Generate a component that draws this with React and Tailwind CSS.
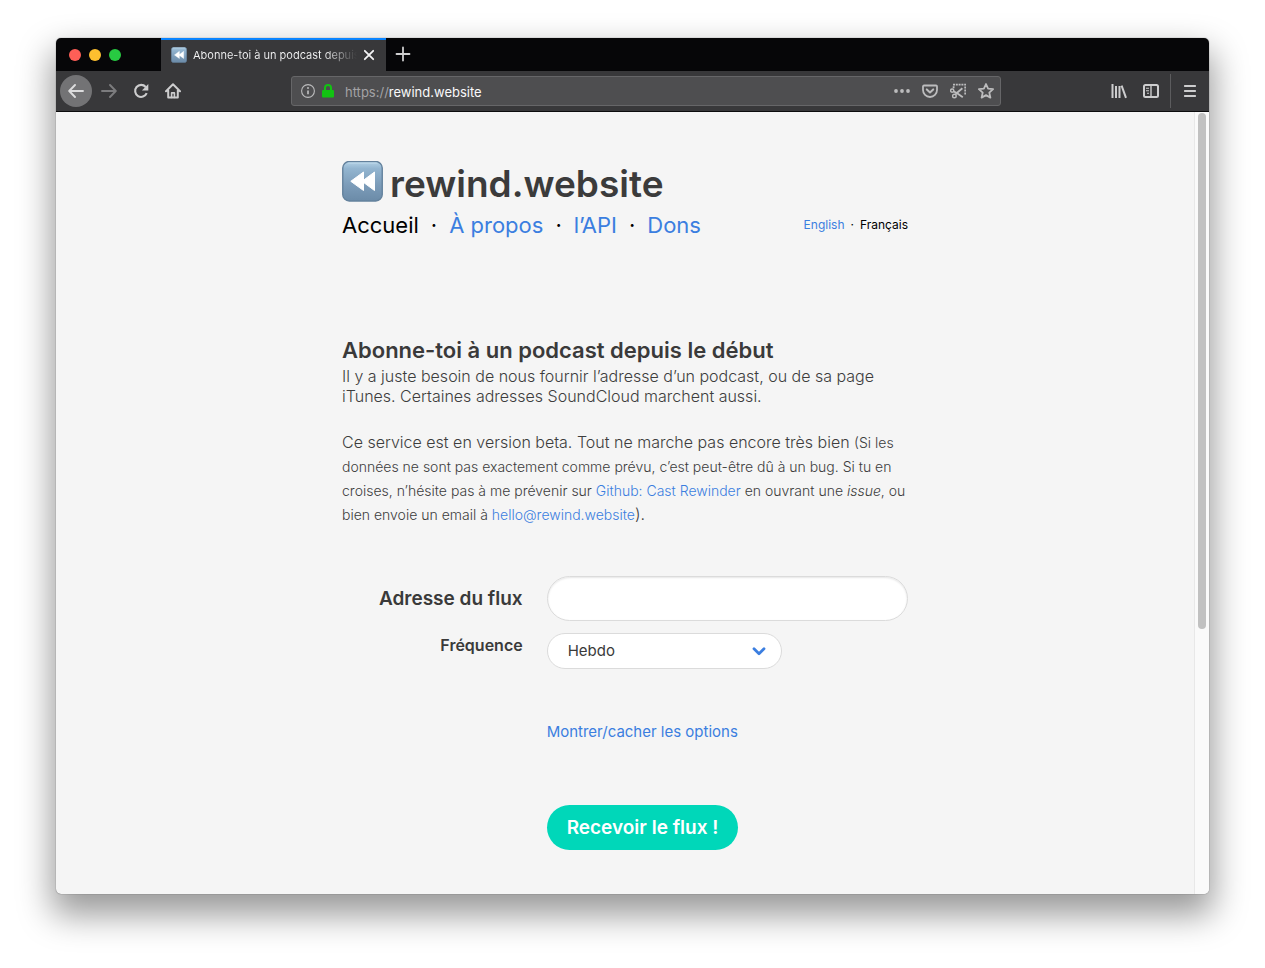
const Icon = ({ children, className = "size-4", ...rest }) => (
  <svg viewBox="0 0 16 16" fill="none" stroke="currentColor" strokeWidth="2" strokeLinecap="round" strokeLinejoin="round" aria-hidden="true" className={className} {...rest}>
    {children}
  </svg>
);

function RewindLogo({ id, className }) {
  return (
    <svg viewBox="0 0 41 41" aria-hidden="true" className={className}>
      <defs>
        <linearGradient id={id} x1="0" y1="0" x2="0" y2="1">
          <stop offset="0" stopColor="#b4d2e6" />
          <stop offset="0.18" stopColor="#93b5d0" />
          <stop offset="0.6" stopColor="#7c9cb9" />
          <stop offset="1" stopColor="#6b8ba8" />
        </linearGradient>
      </defs>
      <rect x="0.75" y="0.5" width="39.5" height="39.5" rx="6.5" fill={`url(#${id})`} stroke="#64829d" strokeWidth="1.4" />
      <path d="M6 2.2h29" stroke="#b9d5e7" strokeWidth="1.2" strokeLinecap="round" />
      <path d="M21.500 11v18.500L8.800 20.300zM32.500 11v18.500L20 20.300z" fill="#fff" stroke="#fff" strokeWidth="1" strokeLinejoin="round" />
    </svg>
  );
}

function ToolButton({ label, className = "text-[#cdcdce]", children }) {
  return (
    <button type="button" aria-label={label} className={`flex size-8 shrink-0 items-center justify-center rounded-full ${className}`}>
      {children}
    </button>
  );
}

function TabBar() {
  return (
    <div className="flex h-[33px] bg-[#060608]">
      <div className="flex w-[105px] items-center gap-2 pl-[13px]">
        <button type="button" aria-label="Fermer la fenêtre" className="size-3 rounded-full bg-[#ff5f57]" />
        <button type="button" aria-label="Réduire" className="size-3 rounded-full bg-[#fdbf2f]" />
        <button type="button" aria-label="Agrandir" className="size-3 rounded-full bg-[#28ca42]" />
      </div>
      <div className="flex w-[225px] items-center border-t-2 border-[#0a84ff] bg-[#38383a] pr-[9px] pb-px pl-[10px]">
        <RewindLogo id="fav" className="size-4 shrink-0" />
        <span className="ml-[6px] min-w-0 flex-1 overflow-hidden whitespace-nowrap bg-linear-to-r from-[#f4f4f5] from-80% to-transparent bg-clip-text text-[11px] text-transparent">
          Abonne-toi à un podcast depuis le début
        </span>
        <button type="button" aria-label="Fermer l’onglet" className="ml-1 flex size-4 shrink-0 items-center justify-center text-[#f4f4f5]">
          <Icon><path d="M3.800 3.800l8.400 8.400M12.200 3.800l-8.400 8.400" strokeWidth="1.800" /></Icon>
        </button>
      </div>
      <button type="button" aria-label="Nouvel onglet" className="flex w-[34px] items-center justify-center pb-px text-[#cfcfd0]">
        <Icon><path d="M8 1.500v13M1.500 8h13" strokeWidth="1.800" /></Icon>
      </button>
    </div>
  );
}

function AddressBar() {
  return (
    <div className="mx-[102px] flex h-[30px] min-w-0 flex-1 items-center rounded-[3px] border border-[#666668] bg-[#4e4e50] pl-2 text-[#bcbcbd]">
      <Icon>
        <circle cx="8" cy="8" r="6.400" strokeWidth="1.100" />
        <path d="M8 7.400v3.800" strokeWidth="1.700" strokeLinecap="butt" />
        <circle cx="8" cy="4.900" r="1" fill="currentColor" stroke="none" />
      </Icon>
      <Icon className="ml-1 size-4 text-[#12c312]">
        <path d="M5 7.500V5a3 3 0 016 0v2.500" />
        <rect x="2" y="7" width="12" height="7.500" rx="1" fill="currentColor" stroke="none" />
      </Icon>
      <div className="ml-[9px] flex min-w-0 flex-1 pt-[3px] text-[13px]">
        <label htmlFor="url" className="whitespace-nowrap text-[#a3a3a5]">https://</label>
        <input id="url" type="text" defaultValue="rewind.website" className="min-w-0 flex-1 bg-transparent text-[#f9f9fa] outline-none" />
      </div>
      <div className="flex shrink-0">
        <button type="button" aria-label="Actions de la page" className="flex w-7 justify-center">
          <Icon fill="currentColor" stroke="none">
            <circle cx="2" cy="8" r="1.900" /><circle cx="8" cy="8" r="1.900" /><circle cx="14" cy="8" r="1.900" />
          </Icon>
        </button>
        <button type="button" aria-label="Enregistrer dans Pocket" className="flex w-7 justify-center">
          <Icon>
            <path d="M2 2.500h12a1 1 0 011 1V7a7 7 0 01-14 0V3.500a1 1 0 011-1z" strokeWidth="1.800" />
            <path d="M4.800 6.400L8 9.400l3.200-3" />
          </Icon>
        </button>
        <button type="button" aria-label="Capture d’écran" className="flex w-7 justify-center">
          <Icon strokeLinecap="butt" strokeWidth="1.400">
            <path d="M3 1.700h13" strokeDasharray="2 0.800" strokeWidth="1.800" />
            <path d="M15.200 3.500v9M3.600 3.300v2" strokeDasharray="2 1" strokeWidth="1.800" />
            <circle cx="2.200" cy="7.600" r="1.600" />
            <circle cx="4.400" cy="13" r="1.800" />
            <path d="M3.600 8.400l3.200 1.600L12.400 5.200M5.400 11.600L6.800 10l6 4.300" strokeWidth="1.800" />
          </Icon>
        </button>
        <button type="button" aria-label="Ajouter aux favoris" className="flex w-7 justify-center">
          <Icon>
            <path d="M8 1l2.100 4.700 5 .5-3.800 3.400 1.100 5L8 12.100l-4.400 2.500 1.100-5L.9 6.200l5-.5z" strokeWidth="1.800" />
          </Icon>
        </button>
      </div>
    </div>
  );
}

function Toolbar() {
  return (
    <div className="flex h-[41px] items-center border-b border-[#0c0c0d] bg-[#38383a] pl-1 pr-[3px]">
      <ToolButton label="Précédent" className="bg-[#737375] text-[#dcdcdd]">
        <Icon><path d="M15 8H1.500M7 2L1.200 8 7 14" strokeWidth="1.900" /></Icon>
      </ToolButton>
      <ToolButton label="Suivant" className="ml-px text-[#7c7c7e]">
        <Icon><path d="M1 8h13.500M9 2l5.800 6L9 14" strokeWidth="1.900" /></Icon>
      </ToolButton>
      <ToolButton label="Actualiser">
        <Icon>
          <path d="M13.700 10.200A6 6 0 1112.700 4" strokeLinecap="butt" strokeWidth="2.100" />
          <path d="M15.300 1v6.500H8.900z" fill="currentColor" stroke="none" />
        </Icon>
      </ToolButton>
      <ToolButton label="Accueil du navigateur">
        <Icon>
          <path d="M1 8.200L8 1.300l7 6.900M3.200 7.500v6.900h9.600V7.500" />
          <path d="M6.600 14.500v-4.600h2.800v4.600" strokeWidth="1.600" />
        </Icon>
      </ToolButton>
      <AddressBar />
      <ToolButton label="Bibliothèque">
        <Icon strokeLinecap="butt"><path d="M1.500 1v14M5 3v12M8.500 3v12M10.600 2.600L15 14.800" /></Icon>
      </ToolButton>
      <ToolButton label="Panneau latéral">
        <Icon>
          <rect x="1" y="2" width="14" height="12" rx="1.500" />
          <path d="M8 2v12" strokeWidth="1.400" />
          <path d="M3 5.200h3M3 7.700h3M4 10.200h2" strokeWidth="1.100" strokeLinecap="butt" />
        </Icon>
      </ToolButton>
      <div className="mx-[3px] h-[34px] w-px bg-[#5c5c5e]" />
      <ToolButton label="Menu">
        <Icon><path d="M2.800 3h10.400M2.800 8h10.400M2.800 13h10.400" strokeWidth="1.800" /></Icon>
      </ToolButton>
    </div>
  );
}

const link = "text-[#3b7ee0]";

function SiteHeader() {
  return (
    <header>
      <div className="flex h-[42px] gap-[7px]">
        <RewindLogo id="logo" className="size-[41px] shrink-0" />
        <h1 className="text-[37px] leading-[46px] font-semibold text-[#3b3b3b]">rewind.website</h1>
      </div>
      <div className="mt-[7px] flex items-center justify-between">
        <nav className="flex gap-3 text-[22px] leading-[30px] text-black">
          <span>Accueil</span>
          <span>·</span>
          <a href="#apropos" className={link}>À propos</a>
          <span>·</span>
          <a href="#api" className={link}>l’API</a>
          <span>·</span>
          <a href="#dons" className={link}>Dons</a>
        </nav>
        <div className="flex gap-[6px] text-xs text-black">
          <a href="#en" className={link}>English</a>
          <span>·</span>
          <span>Français</span>
        </div>
      </div>
    </header>
  );
}

function FeedForm() {
  return (
    <form className="mt-[50px] grid grid-cols-[1fr_2fr] gap-x-6 gap-y-3 text-[#3a3a3a]" onSubmit={(e) => e.preventDefault()}>
      <label htmlFor="feed" className="self-center text-right text-[19px] leading-7 font-semibold">Adresse du flux</label>
      <input id="feed" type="text" className="h-[45px] w-full rounded-full border border-[#dbdbdb] bg-white px-5 text-lg shadow-[inset_0_1px_2px_rgba(10,10,10,0.1)] outline-none" />
      <label htmlFor="frequency" className="text-right text-base leading-6 font-semibold">Fréquence</label>
      <div className="relative w-[235px]">
        <select id="frequency" className="h-9 w-full appearance-none rounded-full border border-[#dbdbdb] bg-white px-5 text-[15px] outline-none">
          <option>Hebdo</option>
        </select>
        <Icon className="pointer-events-none absolute right-[15px] top-[10px] size-4 text-[#3b7ee0]">
          <path d="M3 5.800l5 5 5-5" strokeWidth="2.800" />
        </Icon>
      </div>
      <div className="col-start-2 mt-[38px]">
        <a href="#options" className={`text-[15px] leading-6 ${link}`}>Montrer/cacher les options</a>
      </div>
      <div className="col-start-2 mt-[49px]">
        <button type="submit" className="h-[45px] rounded-full bg-[#00d7b9] px-5 pt-[2px] text-[19px] font-semibold text-white">Recevoir le flux !</button>
      </div>
    </form>
  );
}

export default function App() {
  return (
    <div className="flex min-h-screen flex-col bg-white px-14 pt-[38px] pb-[74px] font-['Inter','Noto_Sans',sans-serif]">
      <div className="flex flex-1 flex-col overflow-hidden rounded-[5px] bg-[#f5f5f5] shadow-[0_0_1px_rgba(0,0,0,0.7),0_17px_34px_4px_rgba(0,0,0,0.4)]">
        <TabBar />
        <Toolbar />
        <div className="flex flex-1">
          <main className="min-w-0 flex-1 pt-[49px] pb-10">
            <div className="mx-auto max-w-[566px]">
              <SiteHeader />
              <section className="mt-[95px] text-[#3d3d3d]">
                <h2 className="text-[22px] leading-[30px] font-semibold text-[#3a3a3a]">Abonne-toi à un podcast depuis le début</h2>
                <p className="mt-px text-base leading-5 font-light">
                  Il y a juste besoin de nous fournir l’adresse d’un podcast, ou de sa page iTunes. Certaines adresses SoundCloud marchent aussi.
                </p>
                <p className="-mr-3 mt-6 text-base leading-6 font-light">
                  Ce service est en version beta. Tout ne marche pas encore très bien{" "}
                  <small className="text-sm leading-5">
                    (Si les données ne sont pas exactement comme prévu, c’est peut-être dû à un bug. Si tu en croises, n’hésite pas à me prévenir sur{" "}
                    <a href="#github" className={link}>Github: Cast Rewinder</a> en ouvrant une <em>issue</em>, ou bien envoie un email à{" "}
                    <a href="mailto:hello@rewind.website" className={link}>hello@rewind.website</a>
                  </small>
                  ).
                </p>
              </section>
              <FeedForm />
            </div>
          </main>
          <div className="w-[15px] shrink-0 border-l border-[#e8e8e8] bg-[#fafafa] pl-[3px] pt-px">
            <div className="h-[516px] w-2 rounded-full bg-[#c1c1c1]" />
          </div>
        </div>
      </div>
    </div>
  );
}
